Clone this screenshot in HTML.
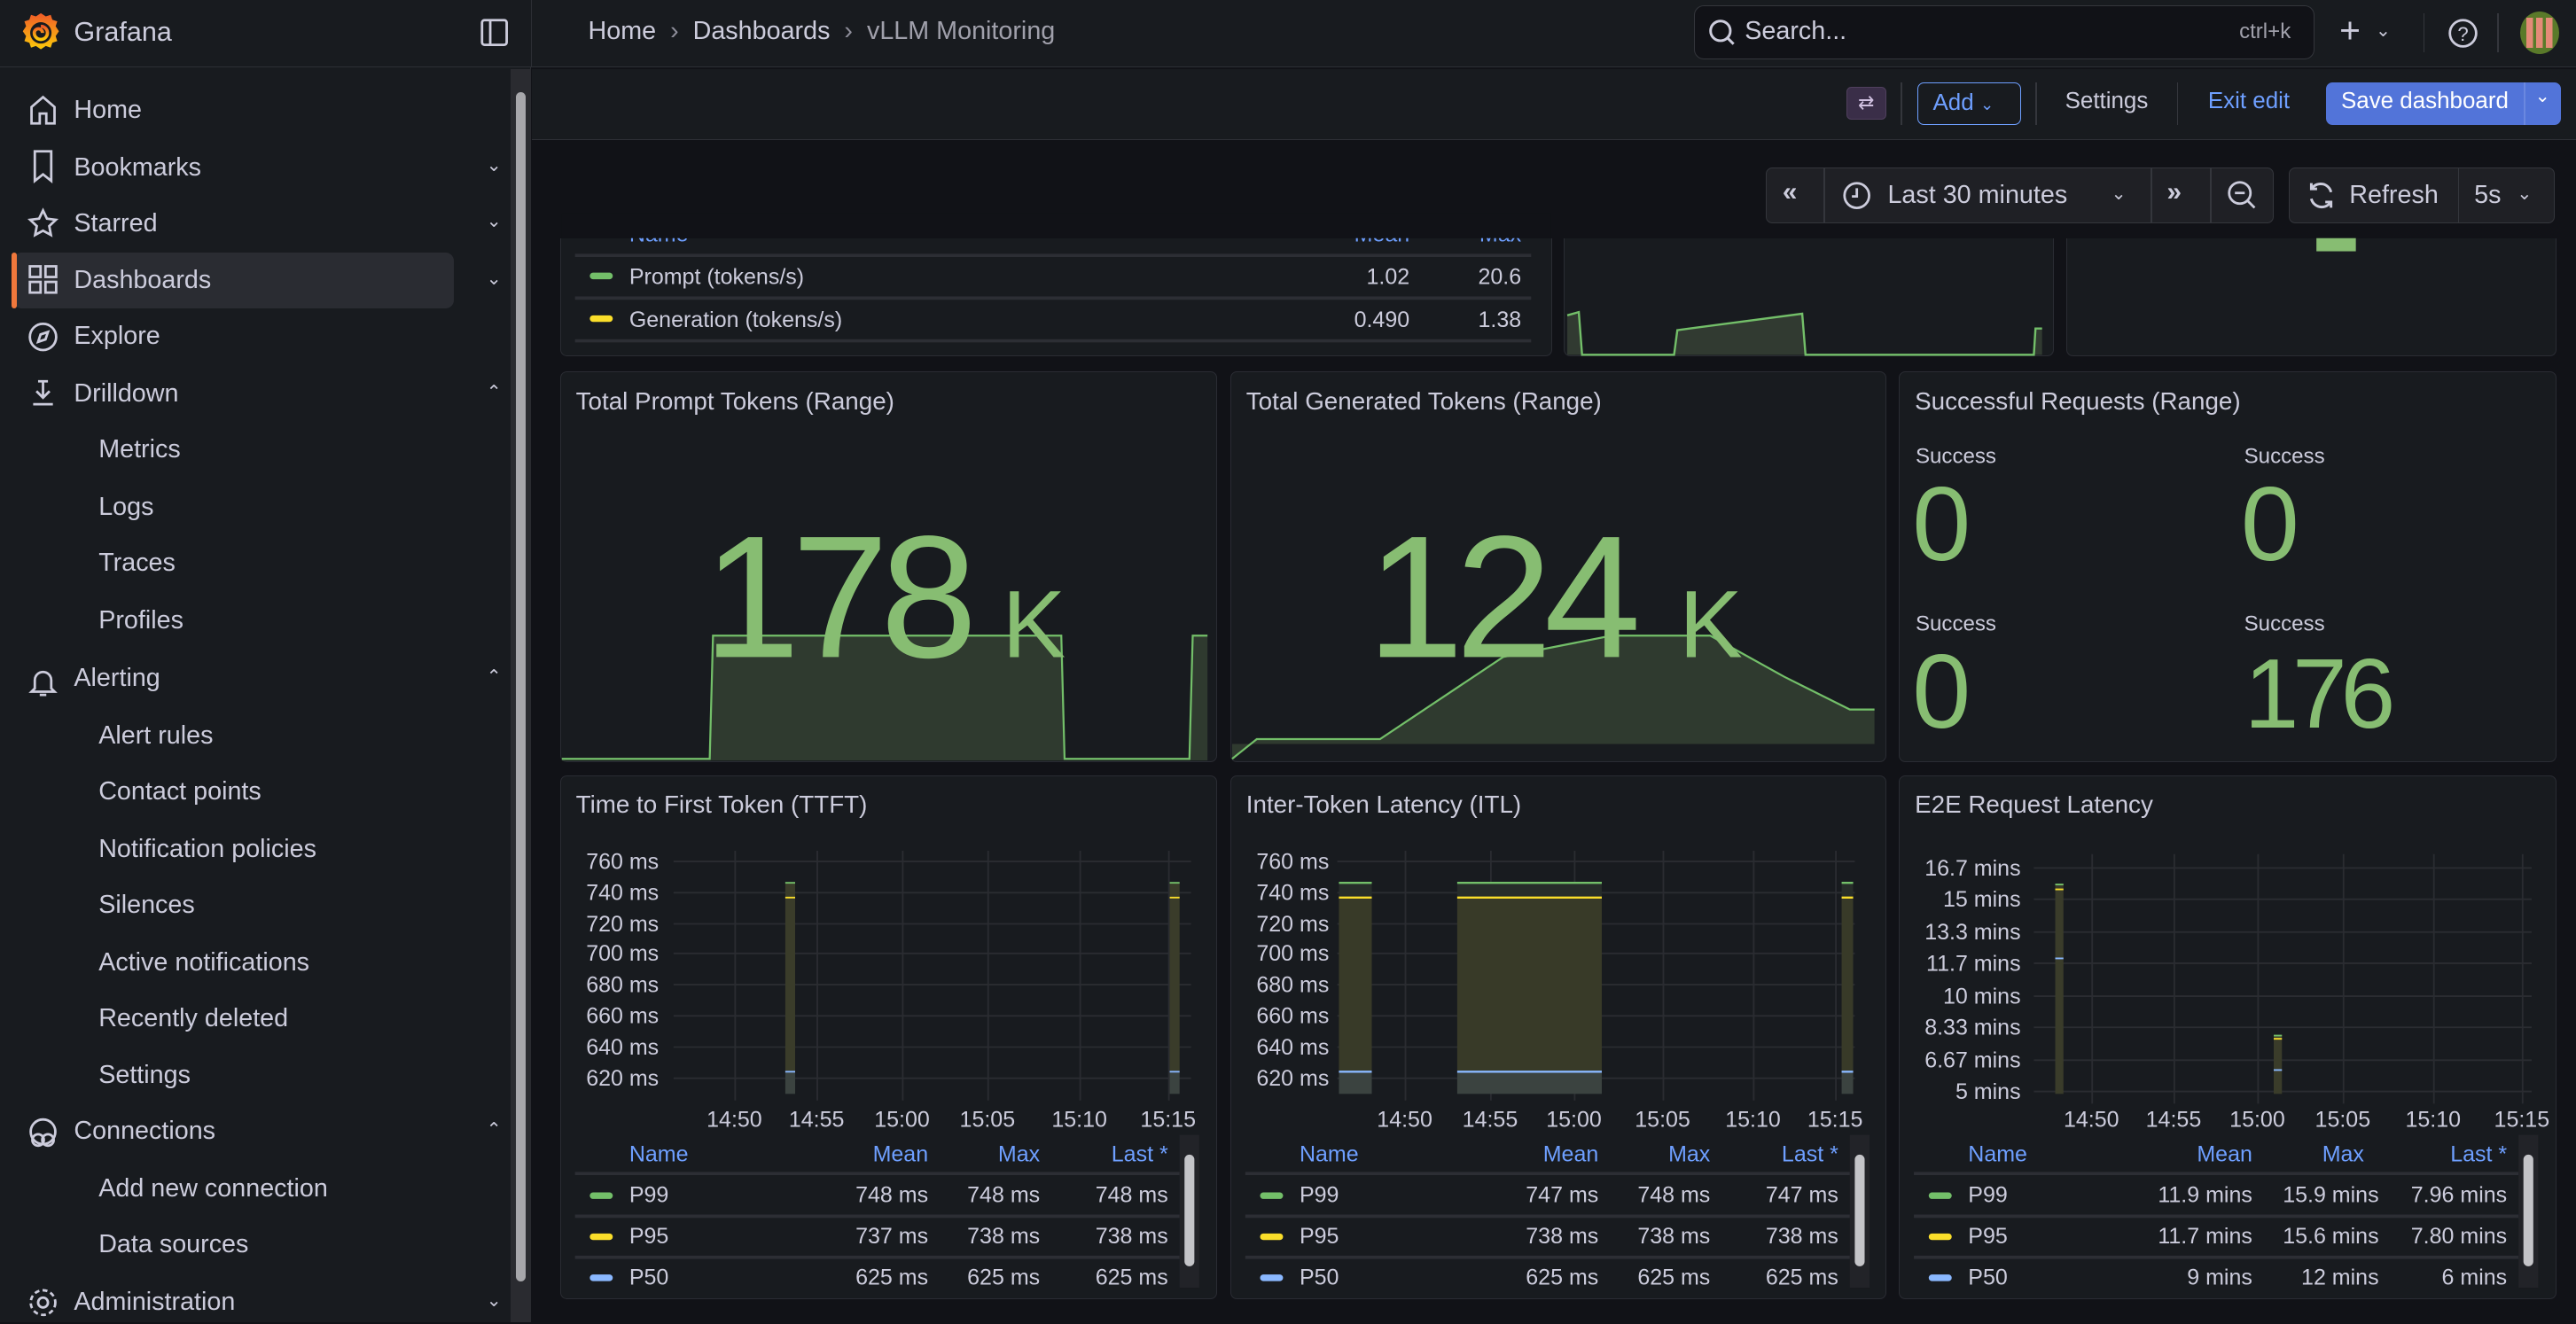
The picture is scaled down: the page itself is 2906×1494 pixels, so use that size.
<!DOCTYPE html>
<html><head><meta charset="utf-8">
<style>
html{zoom:1.85332;}
*{box-sizing:border-box;margin:0;padding:0}
body{width:1568px;height:805px;overflow:hidden;background:#111217;font-family:"Liberation Sans",sans-serif;color:#ccccdc;position:relative}
.abs{position:absolute}
.side{left:0;top:0;width:323px;height:805px;background:#181b1f;border-right:1px solid #2a2c31}
.top{left:0;top:0;width:1568px;height:41px;background:#181b1f;border-bottom:1px solid #2d2f35}
.bar2{left:324px;top:42px;width:1244px;height:43px;background:#181b1f;border-bottom:1px solid #2d2f35}
.nav{position:absolute;left:45px;font-size:15.5px;color:#ccccdc;line-height:20px}
.sub{left:60px}
.chev{position:absolute;left:296px;font-size:11px;color:#ccccdc}
.panel{position:absolute;background:#181b1f;border:1px solid #2a2c33;border-radius:4px;overflow:hidden}
.ptitle{position:absolute;left:9px;top:9px;font-size:15px;color:#ccccdc}
.btn{position:absolute;border:1px solid #34363c;border-radius:4px;background:#1f2025}
</style></head><body>

<div class="abs side"></div>
<div class="abs top"></div>
<div class="abs" style="left:323px;top:0;width:1px;height:41px;background:#2d2f35"></div>

<svg class="abs" style="left:12px;top:7px" width="26" height="26" viewBox="0 0 26 26">
<defs><linearGradient id="g" x1="0" y1="1" x2="0" y2="0"><stop offset="0" stop-color="#fbca0a"/><stop offset="1" stop-color="#f05a28"/></linearGradient></defs>
<path d="M13 1l3 2 3-1 1 3 3 1-1 3 2 3-2 3 1 3-3 1-1 3-3-1-3 2-3-2-3 1-1-3-3-1 1-3-2-3 2-3-1-3 3-1 1-3 3 1z" fill="url(#g)"/>
<circle cx="13" cy="13" r="6.5" fill="#181b1f"/><path d="M13 9a4 4 0 1 1-4 4 2.5 2.5 0 1 1 5 0" stroke="url(#g)" stroke-width="2" fill="none"/>
</svg>
<div class="abs" style="left:45px;top:10px;font-size:16.5px;color:#ccccdc">Grafana</div>
<svg class="abs" style="left:292px;top:11px" width="18" height="18" viewBox="0 0 18 18"><rect x="1.5" y="1.5" width="15" height="15" rx="1.5" fill="none" stroke="#ccccdc" stroke-width="1.5"/><line x1="6.5" y1="2" x2="6.5" y2="16" stroke="#ccccdc" stroke-width="1.5"/></svg>

<div class="abs" style="left:358px;top:10px;font-size:15.5px;color:#ccccdc">Home&nbsp;&nbsp;<span style="color:#8e8e9a">›</span>&nbsp;&nbsp;Dashboards&nbsp;&nbsp;<span style="color:#8e8e9a">›</span>&nbsp;&nbsp;<span style="color:#a0a0ab">vLLM Monitoring</span></div>

<div class="abs" style="left:1031px;top:3px;width:378px;height:33px;background:#111217;border:1px solid #34363c;border-radius:6px"></div>
<svg class="abs" style="left:1039px;top:11px" width="18" height="18" viewBox="0 0 18 18"><circle cx="8" cy="8" r="6" fill="none" stroke="#ccccdc" stroke-width="1.6"/><line x1="12.3" y1="12.3" x2="16" y2="16" stroke="#ccccdc" stroke-width="1.6"/></svg>
<div class="abs" style="left:1062px;top:10px;font-size:15.5px;color:#ccccdc">Search...</div>
<div class="abs" style="left:1363px;top:12px;font-size:13px;color:#a0a0ab">ctrl+k</div>
<div class="abs" style="left:1424px;top:6px;font-size:22px;color:#ccccdc">+</div>
<div class="abs" style="left:1446px;top:12px;font-size:11px;color:#ccccdc">⌄</div>
<div class="abs" style="left:1475px;top:8px;width:1px;height:24px;background:#34363c"></div>
<svg class="abs" style="left:1489px;top:10px" width="20" height="20" viewBox="0 0 20 20"><circle cx="10" cy="10" r="8" fill="none" stroke="#ccccdc" stroke-width="1.5"/><text x="10" y="14.5" font-size="12" text-anchor="middle" fill="#ccccdc" font-family="Liberation Sans">?</text></svg>
<div class="abs" style="left:1520px;top:8px;width:1px;height:24px;background:#34363c"></div>
<div class="abs" style="left:1534px;top:7px;width:24px;height:26px;border-radius:50%;background:#5a7a2a;overflow:hidden">
<div class="abs" style="left:4px;top:4px;width:16px;height:18px;background:repeating-linear-gradient(90deg,#e48b78 0 4px,#5a7a2a 4px 6px)"></div></div>

<div class="abs" style="left:8px;top:154px;width:268px;height:34px;background:#2a2c32;border-radius:5px"></div>
<div class="abs" style="left:7px;top:154px;width:3px;height:34px;background:#f0783c;border-radius:2px"></div>
<svg class="abs" style="left:16px;top:56px" width="20" height="750" viewBox="0 0 20 750" fill="none" stroke="#ccccdc" stroke-width="1.5">
<path d="M3 19V9l7-6 7 6v10h-5v-6h-4v6z"/>
<path d="M5 36h10v18l-5-4-5 4z"/>
<path d="M10 72l2.4 5 5.4.7-4 3.8 1 5.4-4.8-2.6-4.8 2.6 1-5.4-4-3.8 5.4-.7z"/>
<rect x="2" y="106" width="6.5" height="6.5"/><rect x="11.5" y="106" width="6.5" height="6.5"/><rect x="2" y="115.5" width="6.5" height="6.5"/><rect x="11.5" y="115.5" width="6.5" height="6.5"/>
<circle cx="10" cy="149" r="8"/><path d="M13 146l-4.5 1.5-1.5 4.5 4.5-1.5z"/>
<path d="M10 176v10M6 182l4 4 4-4M4 190h12M7 176h6"/>
<path d="M5 363v-5a5 5 0 0 1 10 0v5l2 2H3zM8 367h4"/>
<circle cx="7" cy="638" r="3.5"/><circle cx="13" cy="638" r="3.5"/><circle cx="10" cy="633" r="7.5"/>
<circle cx="10" cy="737" r="3"/><circle cx="10" cy="737" r="7.5" stroke-dasharray="3 2"/>
</svg>
<div class="nav" style="top:57px">Home</div>
<div class="nav" style="top:92px">Bookmarks</div><div class="chev" style="top:94px">⌄</div>
<div class="nav" style="top:126px">Starred</div><div class="chev" style="top:128px">⌄</div>
<div class="nav" style="top:161px">Dashboards</div><div class="chev" style="top:163px">⌄</div>
<div class="nav" style="top:195px">Explore</div>
<div class="nav" style="top:230px">Drilldown</div><div class="chev" style="top:232px">⌃</div>
<div class="nav sub" style="top:264px">Metrics</div>
<div class="nav sub" style="top:299px">Logs</div>
<div class="nav sub" style="top:333px">Traces</div>
<div class="nav sub" style="top:368px">Profiles</div>
<div class="nav" style="top:403px">Alerting</div><div class="chev" style="top:405px">⌃</div>
<div class="nav sub" style="top:438px">Alert rules</div>
<div class="nav sub" style="top:472px">Contact points</div>
<div class="nav sub" style="top:507px">Notification policies</div>
<div class="nav sub" style="top:541px">Silences</div>
<div class="nav sub" style="top:576px">Active notifications</div>
<div class="nav sub" style="top:610px">Recently deleted</div>
<div class="nav sub" style="top:645px">Settings</div>
<div class="nav" style="top:679px">Connections</div><div class="chev" style="top:681px">⌃</div>
<div class="nav sub" style="top:714px">Add new connection</div>
<div class="nav sub" style="top:748px">Data sources</div>
<div class="nav" style="top:783px">Administration</div><div class="chev" style="top:785px">⌄</div>
<div class="abs" style="left:311px;top:42px;width:12px;height:763px;background:#2a2b30"></div>
<div class="abs" style="left:314px;top:56px;width:6px;height:724px;background:#a7a7ab;border-radius:3px"></div>

<div class="abs bar2"></div>
<div class="abs" style="left:1124px;top:53px;width:24px;height:20px;background:#3a2e48;border:1px solid #50405e;border-radius:3px;color:#d0c0e0;font-size:12px;text-align:center;line-height:18px">⇄</div>
<div class="abs" style="left:1157px;top:50px;width:1px;height:26px;background:#34363c"></div>
<div class="abs" style="left:1167px;top:50px;width:63px;height:26px;border:1px solid #6e9fff;border-radius:4px;color:#6e9fff;font-size:14px;line-height:24px;padding-left:9px">Add <span style="font-size:10px">⌄</span></div>
<div class="abs" style="left:1239px;top:50px;width:1px;height:26px;background:#34363c"></div>
<div class="abs" style="left:1257px;top:54px;font-size:14px;color:#ccccdc">Settings</div>
<div class="abs" style="left:1325px;top:50px;width:1px;height:26px;background:#34363c"></div>
<div class="abs" style="left:1344px;top:54px;font-size:14px;color:#6e9fff">Exit edit</div>
<div class="abs" style="left:1416px;top:50px;width:143px;height:26px;background:#5274d9;border-radius:4px"></div>
<div class="abs" style="left:1425px;top:54px;font-size:14px;color:#fff">Save dashboard</div>
<div class="abs" style="left:1536px;top:50px;width:1px;height:26px;background:#6a88e0"></div>
<div class="abs" style="left:1543px;top:52px;font-size:11px;color:#fff">⌄</div>

<div class="btn" style="left:1075px;top:102px;width:309px;height:34px"></div>
<div class="abs" style="left:1110px;top:102px;width:1px;height:34px;background:#34363c"></div>
<div class="abs" style="left:1309px;top:102px;width:1px;height:34px;background:#34363c"></div>
<div class="abs" style="left:1345px;top:102px;width:1px;height:34px;background:#34363c"></div>
<div class="abs" style="left:1085px;top:108px;font-size:16px;color:#ccccdc;font-weight:bold">«</div>
<svg class="abs" style="left:1121px;top:110px" width="18" height="18" viewBox="0 0 18 18" fill="none" stroke="#ccccdc" stroke-width="1.5"><circle cx="9" cy="9" r="7.5"/><path d="M9 4.5V9.5H6"/></svg>
<div class="abs" style="left:1149px;top:110px;font-size:15.5px;color:#ccccdc">Last 30 minutes</div>
<div class="abs" style="left:1285px;top:111px;font-size:11px;color:#ccccdc">⌄</div>
<div class="abs" style="left:1319px;top:108px;font-size:16px;color:#ccccdc;font-weight:bold">»</div>
<svg class="abs" style="left:1355px;top:109px" width="20" height="20" viewBox="0 0 20 20" fill="none" stroke="#ccccdc" stroke-width="1.5"><circle cx="8.5" cy="8.5" r="6.5"/><path d="M5.5 8.5h6M13.5 13.5l4 4"/></svg>
<div class="btn" style="left:1393px;top:102px;width:162px;height:34px"></div>
<div class="abs" style="left:1496px;top:102px;width:1px;height:34px;background:#34363c"></div>
<svg class="abs" style="left:1403px;top:109px" width="20" height="20" viewBox="0 0 20 20" fill="none" stroke="#ccccdc" stroke-width="1.6"><path d="M16 8A6.5 6.5 0 0 0 4.5 5.5M4 2.5v3.5h3.5M4 12a6.5 6.5 0 0 0 11.5 2.5M16 17.5v-3.5h-3.5"/></svg>
<div class="abs" style="left:1430px;top:110px;font-size:15.5px;color:#ccccdc">Refresh</div>
<div class="abs" style="left:1506px;top:110px;font-size:15.5px;color:#ccccdc">5s</div>
<div class="abs" style="left:1532px;top:111px;font-size:11px;color:#ccccdc">⌄</div>

<div class="panel" style="left:341px;top:145px;width:604px;height:72px;border-top:none;border-radius:0 0 4px 4px"></div>
<div class="panel" style="left:952px;top:145px;width:298px;height:72px;border-top:none;border-radius:0 0 4px 4px"></div>
<div class="panel" style="left:1258px;top:145px;width:298px;height:72px;border-top:none;border-radius:0 0 4px 4px"></div>

<div class="panel" style="left:341px;top:226px;width:400px;height:238px"><div class="ptitle">Total Prompt Tokens (Range)</div></div>
<div class="panel" style="left:749px;top:226px;width:399px;height:238px"><div class="ptitle">Total Generated Tokens (Range)</div></div>
<div class="panel" style="left:1156px;top:226px;width:400px;height:238px"><div class="ptitle">Successful Requests (Range)</div></div>

<div class="panel" style="left:341px;top:472px;width:400px;height:319px"><div class="ptitle">Time to First Token (TTFT)</div></div>
<div class="panel" style="left:749px;top:472px;width:399px;height:319px"><div class="ptitle">Inter-Token Latency (ITL)</div></div>
<div class="panel" style="left:1156px;top:472px;width:400px;height:319px"><div class="ptitle">E2E Request Latency</div></div>

<svg class="abs" style="left:0;top:0" width="1568" height="805" viewBox="0 0 1568 805" font-family="Liberation Sans, sans-serif">
<g font-size="13.5" fill="#ccccdc">
<text x="383" y="147" fill="#6e9fff">Name</text><text x="858" y="147" fill="#6e9fff" text-anchor="end">Mean</text><text x="926" y="147" fill="#6e9fff" text-anchor="end">Max</text>
<rect x="342" y="130" width="602" height="15" fill="#111217"/>
<line x1="350" y1="155.5" x2="932" y2="155.5" stroke="#2c2e34" stroke-width="2"/>
<line x1="350" y1="181.5" x2="932" y2="181.5" stroke="#2c2e34" stroke-width="2"/>
<line x1="350" y1="207.5" x2="932" y2="207.5" stroke="#2c2e34" stroke-width="2"/>
<rect x="359" y="166" width="14" height="4" rx="2" fill="#73bf69"/><text x="383" y="173">Prompt (tokens/s)</text><text x="858" y="173" text-anchor="end">1.02</text><text x="926" y="173" text-anchor="end">20.6</text>
<rect x="359" y="192" width="14" height="4" rx="2" fill="#fade2a"/><text x="383" y="199">Generation (tokens/s)</text><text x="858" y="199" text-anchor="end">0.490</text><text x="926" y="199" text-anchor="end">1.38</text>
</g>
<path d="M954 216V192l7-2 2 26h56l2-15 76-10 2 25h139l1-16h4v16z" fill="#313a31"/>
<path d="M954 192l7-2 2 26h56l2-15 76-10 2 25h139l1-16h4" fill="none" stroke="#73bf69" stroke-width="1.3"/>
<rect x="1410" y="145" width="24" height="8" fill="#87bd72"/>

<path d="M342 462h90l2-75h212l2 75h76l2-75h9v76H342z" fill="#2f3a2f"/>
<path d="M342 462h90l2-75h212l2 75h76l2-75h9" fill="none" stroke="#73bf69" stroke-width="1.2"/>
<path d="M750 462l15-12h75l75-50 66-13h60l45 25 40 20h15v21H750z" fill="#2f3a2f"/>
<path d="M750 462l15-12h75l75-50 66-13h60l45 25 40 20h15" fill="none" stroke="#73bf69" stroke-width="1.2"/>
<g fill="#87bd72">
<text x="428" y="400" font-size="106" letter-spacing="-5">178</text><text x="610" y="400" font-size="58">K</text>
<text x="832" y="400" font-size="106" letter-spacing="-5">124</text><text x="1022" y="400" font-size="58">K</text>
<text x="1164" y="341" font-size="64">0</text><text x="1364" y="341" font-size="64">0</text>
<text x="1164" y="443" font-size="64">0</text><text x="1366" y="443" font-size="60" letter-spacing="-4">176</text>
</g>
<g font-size="13" fill="#ccccdc"><text x="1166" y="282">Success</text><text x="1366" y="282">Success</text><text x="1166" y="384">Success</text><text x="1366" y="384">Success</text></g>

<g stroke="#2a2c31" stroke-width="1">
<path d="M410 524.5h315M410 543.5h315M410 562.5h315M410 580.5h315M410 599.5h315M410 618.5h315M410 637.5h315M410 656.5h315M447.5 518v152M497.5 518v152M549.5 518v152M601.5 518v152M657.5 518v152M711.5 518v152"/>
<path d="M814 524.5h315M814 543.5h315M814 562.5h315M814 580.5h315M814 599.5h315M814 618.5h315M814 637.5h315M814 656.5h315M855.5 518v152M907.5 518v152M958.5 518v152M1012.5 518v152M1067.5 518v152M1117.5 518v152"/>
<path d="M1238 528.5h303M1238 547.5h303M1238 567.5h303M1238 586.5h303M1238 606.5h303M1238 625.5h303M1238 645.5h303M1238 664.5h303M1273.5 520v152M1323.5 520v152M1374.5 520v152M1426.5 520v152M1481.5 520v152M1535.5 520v152"/>
</g>
<g>
<rect x="478" y="537" width="6" height="115" fill="#3a3c2a"/><rect x="478" y="652" width="6" height="14" fill="#3b4340"/>
<rect x="712" y="537" width="6" height="115" fill="#3a3c2a"/><rect x="712" y="652" width="6" height="14" fill="#3b4340"/>
<path d="M478 537.5h6M712 537.5h6" stroke="#73bf69"/><path d="M478 546.5h6M712 546.5h6" stroke="#fade2a"/><path d="M478 652.5h6M712 652.5h6" stroke="#8ab8ff"/>
<rect x="815" y="537" width="20" height="9" fill="#272d2a"/><rect x="815" y="546" width="20" height="106" fill="#383a28"/><rect x="815" y="652" width="20" height="14" fill="#3b4340"/>
<rect x="887" y="537" width="88" height="9" fill="#272d2a"/><rect x="887" y="546" width="88" height="106" fill="#383a28"/><rect x="887" y="652" width="88" height="14" fill="#3b4340"/>
<rect x="1121" y="537" width="7" height="9" fill="#272d2a"/><rect x="1121" y="546" width="7" height="106" fill="#383a28"/><rect x="1121" y="652" width="7" height="14" fill="#3b4340"/>
<path d="M815 537.5h20M887 537.5h88M1121 537.5h7" stroke="#73bf69" stroke-width="1.3"/>
<path d="M815 546.5h20M887 546.5h88M1121 546.5h7" stroke="#fade2a" stroke-width="1.3"/>
<path d="M815 652.5h20M887 652.5h88M1121 652.5h7" stroke="#8ab8ff" stroke-width="1.3"/>
<rect x="1251" y="538" width="5" height="128" fill="#3a3c2a"/><rect x="1384" y="630" width="5" height="36" fill="#3a3c2a"/>
<path d="M1251 538.5h5M1384 630.5h5" stroke="#73bf69"/><path d="M1251 541.5h5M1384 632.5h5" stroke="#fade2a"/><path d="M1251 583.5h5M1384 651.5h5" stroke="#8ab8ff"/>
</g>
<g font-size="13.5" fill="#ccccdc" text-anchor="end">
<text x="401" y="529">760 ms</text><text x="401" y="548">740 ms</text><text x="401" y="567">720 ms</text><text x="401" y="585">700 ms</text><text x="401" y="604">680 ms</text><text x="401" y="623">660 ms</text><text x="401" y="642">640 ms</text><text x="401" y="661">620 ms</text>
<text x="809" y="529">760 ms</text><text x="809" y="548">740 ms</text><text x="809" y="567">720 ms</text><text x="809" y="585">700 ms</text><text x="809" y="604">680 ms</text><text x="809" y="623">660 ms</text><text x="809" y="642">640 ms</text><text x="809" y="661">620 ms</text>
<text x="1230" y="533">16.7 mins</text><text x="1230" y="552">15 mins</text><text x="1230" y="572">13.3 mins</text><text x="1230" y="591">11.7 mins</text><text x="1230" y="611">10 mins</text><text x="1230" y="630">8.33 mins</text><text x="1230" y="650">6.67 mins</text><text x="1230" y="669">5 mins</text>
</g>
<g font-size="13.5" fill="#ccccdc" text-anchor="middle">
<text x="447" y="686">14:50</text><text x="497" y="686">14:55</text><text x="549" y="686">15:00</text><text x="601" y="686">15:05</text><text x="657" y="686">15:10</text><text x="711" y="686">15:15</text>
<text x="855" y="686">14:50</text><text x="907" y="686">14:55</text><text x="958" y="686">15:00</text><text x="1012" y="686">15:05</text><text x="1067" y="686">15:10</text><text x="1117" y="686">15:15</text>
<text x="1273" y="686">14:50</text><text x="1323" y="686">14:55</text><text x="1374" y="686">15:00</text><text x="1426" y="686">15:05</text><text x="1481" y="686">15:10</text><text x="1535" y="686">15:15</text>
</g>
<g font-size="13.5" fill="#ccccdc">
<g>
<text x="383" y="707" fill="#6e9fff">Name</text><text x="565" y="707" fill="#6e9fff" text-anchor="end">Mean</text><text x="633" y="707" fill="#6e9fff" text-anchor="end">Max</text><text x="711" y="707" fill="#6e9fff" text-anchor="end">Last *</text>
<path d="M350 714.5h368M350 740.5h368M350 765.5h368" stroke="#2c2e34" stroke-width="2"/>
<rect x="359" y="726" width="14" height="4" rx="2" fill="#73bf69"/><text x="383" y="732">P99</text><text x="565" y="732" text-anchor="end">748 ms</text><text x="633" y="732" text-anchor="end">748 ms</text><text x="711" y="732" text-anchor="end">748 ms</text>
<rect x="359" y="751" width="14" height="4" rx="2" fill="#fade2a"/><text x="383" y="757">P95</text><text x="565" y="757" text-anchor="end">737 ms</text><text x="633" y="757" text-anchor="end">738 ms</text><text x="711" y="757" text-anchor="end">738 ms</text>
<rect x="359" y="776" width="14" height="4" rx="2" fill="#8ab8ff"/><text x="383" y="782">P50</text><text x="565" y="782" text-anchor="end">625 ms</text><text x="633" y="782" text-anchor="end">625 ms</text><text x="711" y="782" text-anchor="end">625 ms</text>
<rect x="718" y="691" width="12" height="93" fill="#222328"/><rect x="721" y="703" width="6" height="68" rx="3" fill="#c4c4c8"/>
</g>
<g>
<text x="791" y="707" fill="#6e9fff">Name</text><text x="973" y="707" fill="#6e9fff" text-anchor="end">Mean</text><text x="1041" y="707" fill="#6e9fff" text-anchor="end">Max</text><text x="1119" y="707" fill="#6e9fff" text-anchor="end">Last *</text>
<path d="M758 714.5h368M758 740.5h368M758 765.5h368" stroke="#2c2e34" stroke-width="2"/>
<rect x="767" y="726" width="14" height="4" rx="2" fill="#73bf69"/><text x="791" y="732">P99</text><text x="973" y="732" text-anchor="end">747 ms</text><text x="1041" y="732" text-anchor="end">748 ms</text><text x="1119" y="732" text-anchor="end">747 ms</text>
<rect x="767" y="751" width="14" height="4" rx="2" fill="#fade2a"/><text x="791" y="757">P95</text><text x="973" y="757" text-anchor="end">738 ms</text><text x="1041" y="757" text-anchor="end">738 ms</text><text x="1119" y="757" text-anchor="end">738 ms</text>
<rect x="767" y="776" width="14" height="4" rx="2" fill="#8ab8ff"/><text x="791" y="782">P50</text><text x="973" y="782" text-anchor="end">625 ms</text><text x="1041" y="782" text-anchor="end">625 ms</text><text x="1119" y="782" text-anchor="end">625 ms</text>
<rect x="1126" y="691" width="12" height="93" fill="#222328"/><rect x="1129" y="703" width="6" height="68" rx="3" fill="#c4c4c8"/>
</g>
<g>
<text x="1198" y="707" fill="#6e9fff">Name</text><text x="1371" y="707" fill="#6e9fff" text-anchor="end">Mean</text><text x="1439" y="707" fill="#6e9fff" text-anchor="end">Max</text><text x="1526" y="707" fill="#6e9fff" text-anchor="end">Last *</text>
<path d="M1165 714.5h368M1165 740.5h368M1165 765.5h368" stroke="#2c2e34" stroke-width="2"/>
<rect x="1174" y="726" width="14" height="4" rx="2" fill="#73bf69"/><text x="1198" y="732">P99</text><text x="1371" y="732" text-anchor="end">11.9 mins</text><text x="1448" y="732" text-anchor="end">15.9 mins</text><text x="1526" y="732" text-anchor="end">7.96 mins</text>
<rect x="1174" y="751" width="14" height="4" rx="2" fill="#fade2a"/><text x="1198" y="757">P95</text><text x="1371" y="757" text-anchor="end">11.7 mins</text><text x="1448" y="757" text-anchor="end">15.6 mins</text><text x="1526" y="757" text-anchor="end">7.80 mins</text>
<rect x="1174" y="776" width="14" height="4" rx="2" fill="#8ab8ff"/><text x="1198" y="782">P50</text><text x="1371" y="782" text-anchor="end">9 mins</text><text x="1448" y="782" text-anchor="end">12 mins</text><text x="1526" y="782" text-anchor="end">6 mins</text>
<rect x="1533" y="691" width="12" height="93" fill="#222328"/><rect x="1536" y="703" width="6" height="68" rx="3" fill="#c4c4c8"/>
</g>
</g>
</svg>
</body></html>
